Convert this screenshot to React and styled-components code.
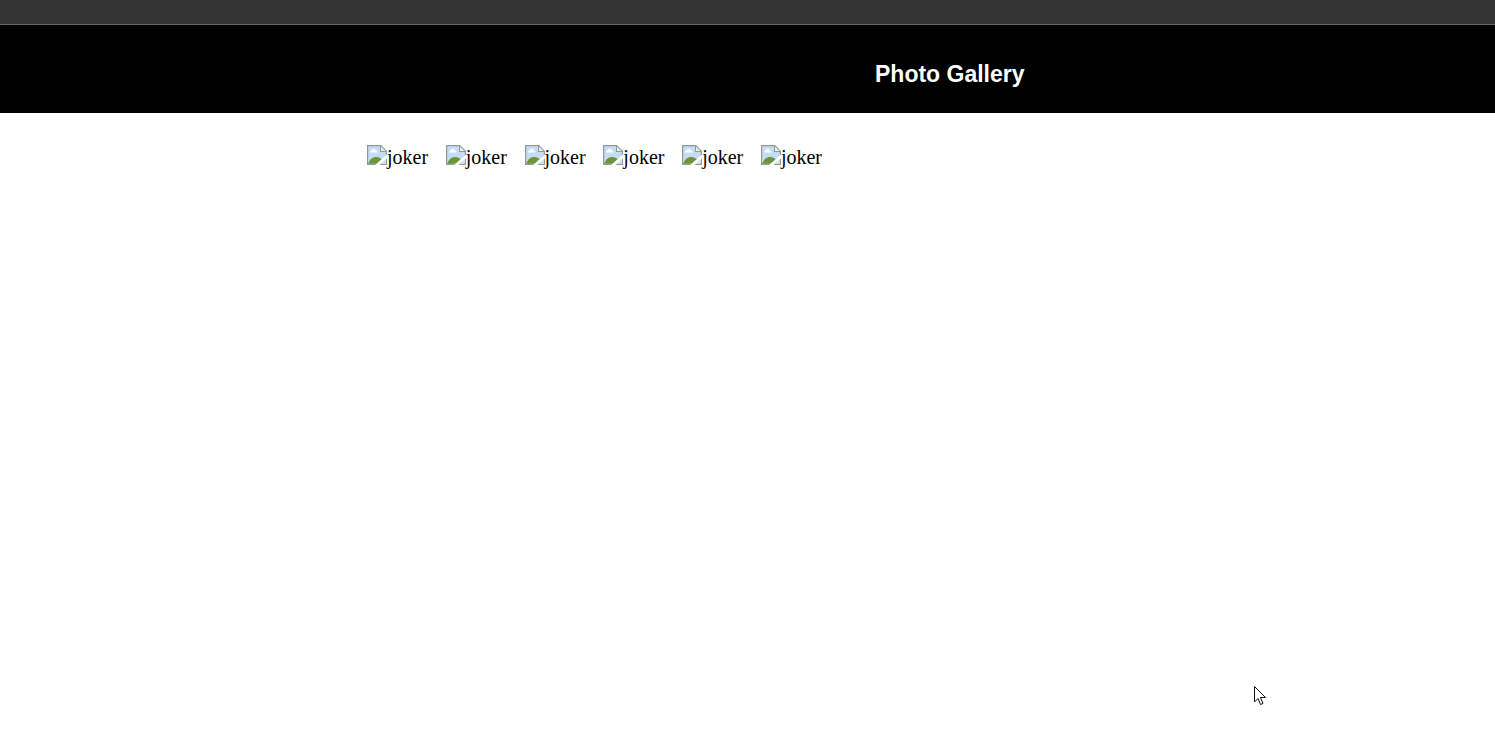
import React from "react";
import styled, { createGlobalStyle } from "styled-components";

const GlobalStyle = createGlobalStyle`
  body {
    margin: 0;
    background: #fff;
    color: #000;
    font-family: "Liberation Serif", "Times New Roman", serif;
    font-size: 20px;
    line-height: 24px;
  }
`;

const Page = styled.div`
  position: relative;
  min-height: 100vh;
`;

const TopStrip = styled.div`
  height: 24px;
  background: #333;
  border-bottom: 1px solid #666;
`;

const Header = styled.header`
  padding: 37px 0 27px 875px;
  background: #000;
`;

const Title = styled.h3`
  margin: 0;
  color: #fff;
  font-family: "Liberation Sans", Arial, sans-serif;
  font-size: 23px;
  font-weight: 700;
  line-height: 24px;
`;

const Gallery = styled.ul`
  display: flex;
  justify-content: space-between;
  max-width: 455px;
  margin: 32px 0 0 367px;
  padding: 0;
  list-style: none;
`;

const Photo = styled.li`
  display: flex;
  align-items: flex-start;
`;

const BrokenImage = styled.svg`
  display: block;
  flex: none;
  width: 20px;
  height: 20px;
`;

const Pointer = styled.svg`
  position: absolute;
  top: 685px;
  left: 1253px;
  width: 14px;
  height: 21px;
`;

const photos = ["joker", "joker", "joker", "joker", "joker", "joker"];

function BrokenImageIcon() {
  return (
    <BrokenImage viewBox="0 0 20 20" aria-hidden="true">
      <path d="M0 0H14L20 6V20H0Z" fill="#929b92" />
      <path d="M1.200 1.200H13V7H18.800V18.800H1.200Z" fill="#c6dcf5" />
      <path d="M14 1.500V6H18.500Z" fill="#e8eef5" />
      <path d="M3 7.500C3 5.800 4 5.300 5 5.300C5.300 3.300 8 3.300 8.500 5.300C9.800 5.300 10.500 6.200 10.500 7.500Z" fill="#fff" />
      <path d="M1.200 18.800C2.500 14.500 5.500 12 9 12C12 12 14.500 13.500 16 16L13 18.800Z" fill="#6f9438" />
      <path d="M8 20L20 9.500V13.500L12.500 20Z" fill="#fff" />
      <path d="M13.500 18.800L18.800 14.200V18.800Z" fill="#d3e3ef" />
    </BrokenImage>
  );
}

export default function App() {
  return (
    <>
      <GlobalStyle />
      <Page>
        <TopStrip />
        <Header>
          <Title>Photo Gallery</Title>
        </Header>
        <main>
          <Gallery>
            {photos.map((name, index) => (
              <Photo key={index}>
                <BrokenImageIcon />
                <span>{name}</span>
              </Photo>
            ))}
          </Gallery>
        </main>
        <Pointer viewBox="0 0 14 21" aria-hidden="true">
          <path
            d="M1.500 1.500V17L5 13.500L7.500 19.500L10 18.500L7.500 12.500H12.500Z"
            fill="#fff"
            stroke="#10131c"
          />
        </Pointer>
      </Page>
    </>
  );
}
